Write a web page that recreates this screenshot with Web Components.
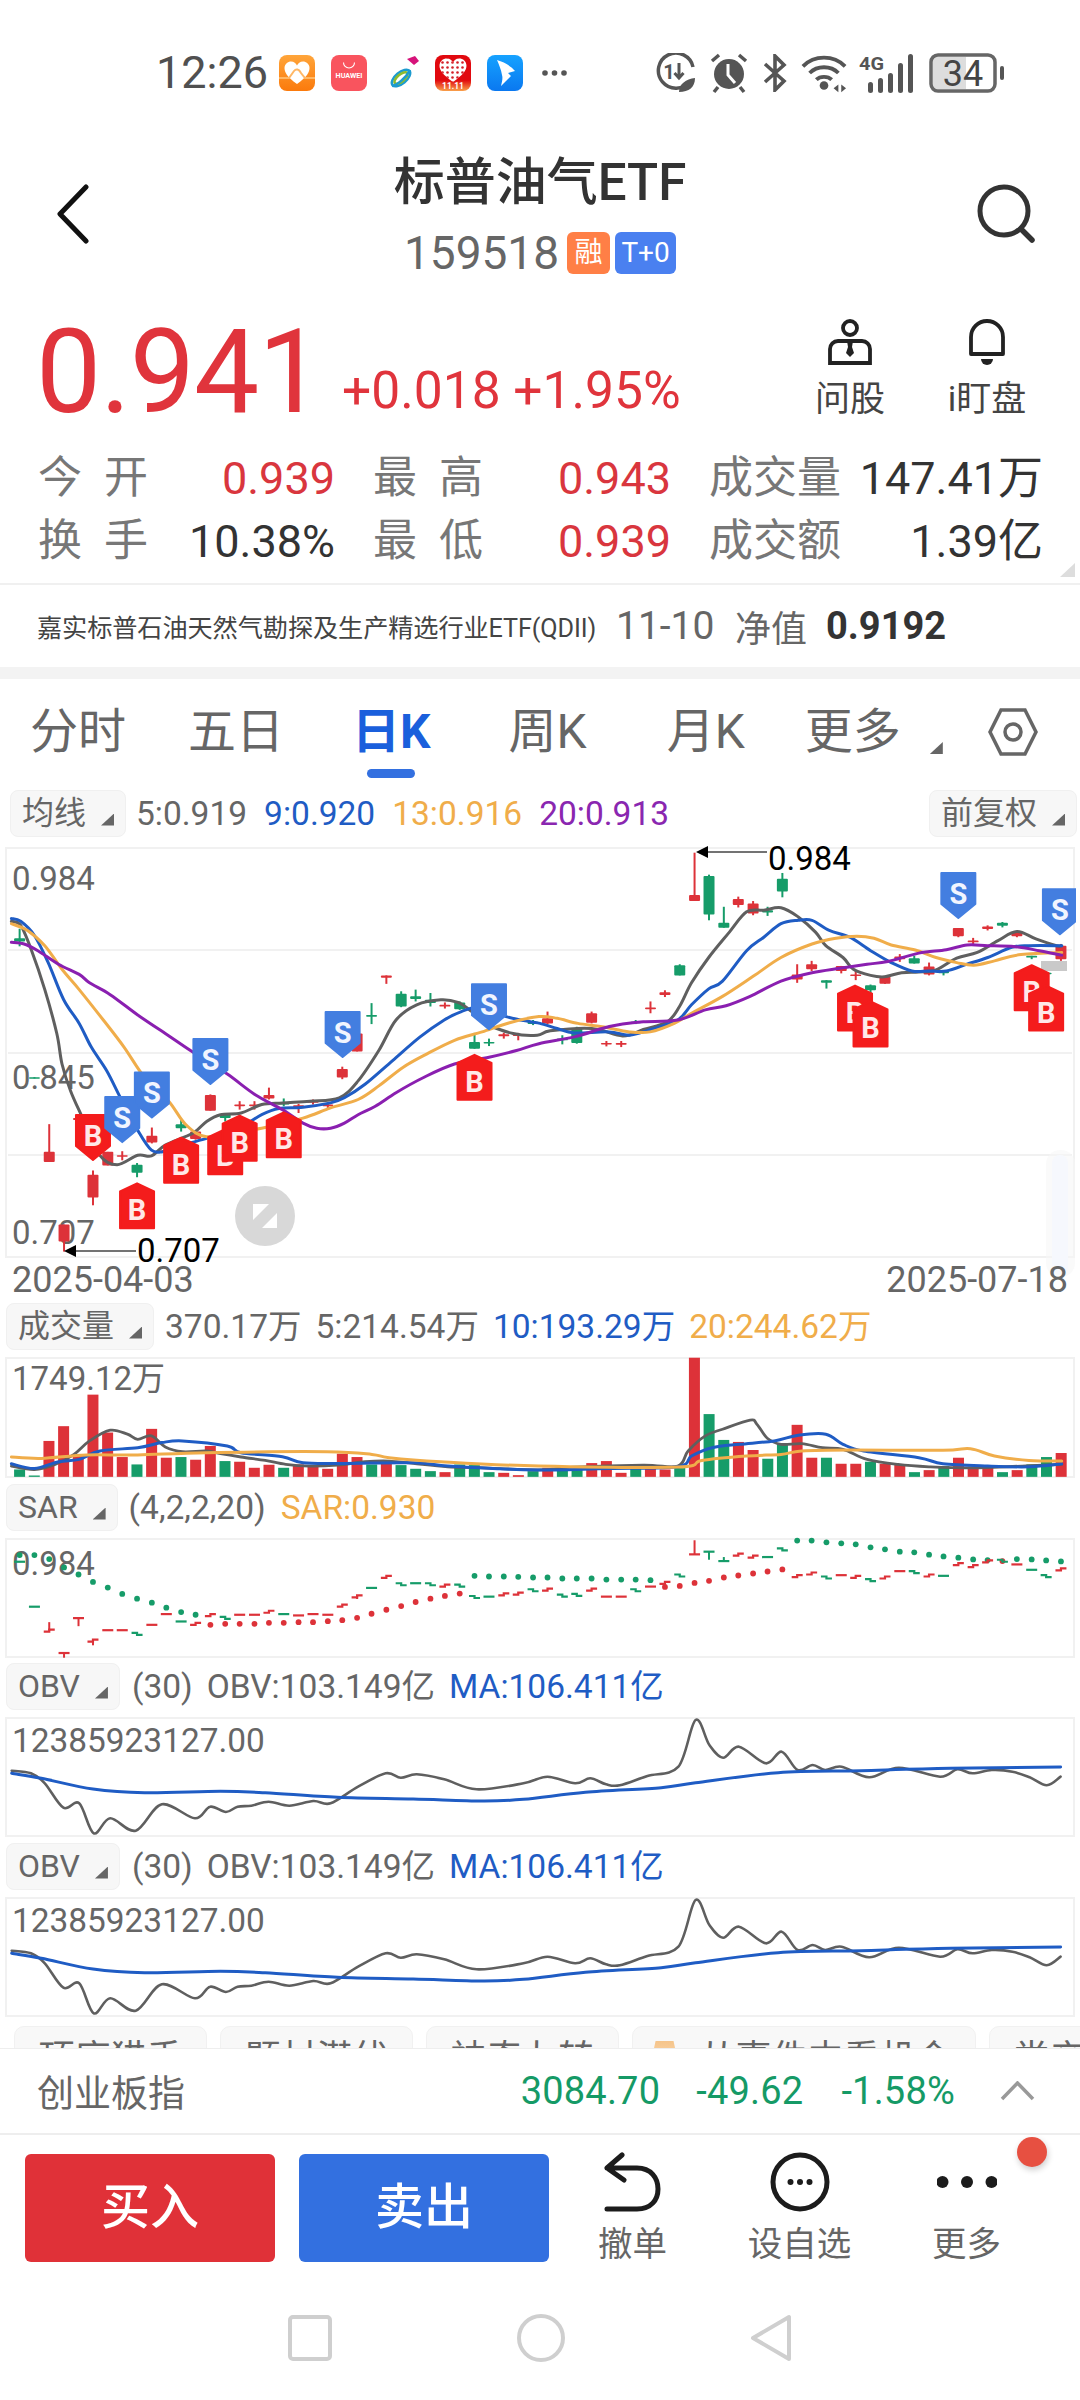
<!DOCTYPE html>
<html lang="zh-CN"><head><meta charset="utf-8"><title>标普油气ETF</title>
<style>
html,body{margin:0;padding:0;background:#fff}
body{width:1080px;height:2400px;overflow:hidden;font-family:Roboto,"Noto Sans CJK SC",sans-serif;color:#666}
.b{color:#1f5cc4}.o{color:#f0ad4a}.p{color:#8a27b0}.r{color:#d9363e}.k{color:#333}
</style></head><body>
<status-bar></status-bar>
<app-header></app-header>
<quote-panel>
  <stat-cell label="今开" spaced><span class="r">0.939</span></stat-cell>
  <stat-cell label="最高" spaced><span class="r">0.943</span></stat-cell>
  <stat-cell label="成交量"><span class="k">147.41万</span></stat-cell>
  <stat-cell label="换手" spaced><span class="k">10.38%</span></stat-cell>
  <stat-cell label="最低" spaced><span class="r">0.939</span></stat-cell>
  <stat-cell label="成交额"><span class="k">1.39亿</span></stat-cell>
</quote-panel>
<fund-row></fund-row>
<chart-tabs></chart-tabs>
<ind-row pill="均线" gap="17" h="57" left="10" ml="10" right="3"><span>5:0.919</span><span class="b">9:0.920</span><span class="o">13:0.916</span><span class="p">20:0.913</span><ind-pill slot="right" label="前复权"></ind-pill></ind-row>
<k-chart></k-chart>
<date-axis></date-axis>
<ind-row pill="成交量" gap="14" h="54" ml="11"><span>370.17万</span><span>5:214.54万</span><span class="b">10:193.29万</span><span class="o">20:244.62万</span></ind-row>
<vol-chart></vol-chart>
<ind-row pill="SAR" gap="15" h="60" top="6" ml="11"><span>(4,2,2,20)</span><span class="o">SAR:0.930</span></ind-row>
<sar-chart></sar-chart>
<ind-row pill="OBV" gap="14" h="59" top="5" ml="12"><span>(30)</span><span>OBV:103.149亿</span><span class="b">MA:106.411亿</span></ind-row>
<obv-chart></obv-chart>
<ind-row pill="OBV" gap="14" h="60" top="6" ml="12"><span>(30)</span><span>OBV:103.149亿</span><span class="b">MA:106.411亿</span></ind-row>
<obv-chart></obv-chart>
<tag-strip></tag-strip>
<index-bar></index-bar>
<trade-bar></trade-bar>
<nav-bar></nav-bar>
<script>
function def(name,html,extra){
  customElements.define(name,class extends HTMLElement{
    constructor(){super();const s=this.attachShadow({mode:'open'});
      s.innerHTML=typeof html==='function'?html(this):html;if(extra)extra(this,s);}
  });
}
/* ---------- chart helpers ---------- */
const RED='#dd3239',GRN='#169c69',GRY='#5f5f5f',BLU='#1f5cc4',ORG='#f0ad4a',PUR='#8a1fb0';
const CX=i=>19.6+14.67*i;
function sm(p){let d=`M${p[0][0].toFixed(1)} ${p[0][1].toFixed(1)}`;
  for(let i=0;i<p.length-1;i++){const a=p[i-1]||p[i],b=p[i],c=p[i+1],e=p[i+2]||c;
    d+=`C${(b[0]+(c[0]-a[0])/6).toFixed(1)} ${(b[1]+(c[1]-a[1])/6).toFixed(1)} ${(c[0]-(e[0]-b[0])/6).toFixed(1)} ${(c[1]-(e[1]-b[1])/6).toFixed(1)} ${c[0].toFixed(1)} ${c[1].toFixed(1)}`;}
  return d;}
function line(p,c,w){return `<path d="${sm(p)}" fill="none" stroke="${c}" stroke-width="${w}" stroke-linejoin="round" stroke-linecap="round"/>`;}
function merge(L,R,fx,fy){return L.map(a=>[a[0]/fx,fy(a[1])]).concat(R.map(a=>[540+a[0]/fx,fy(a[1])]));}
const frame=(x,y,w,h)=>`<rect x="${x+1}" y="${y+1}" width="${w-2}" height="${h-2}" fill="none" stroke="#f1f1f1" stroke-width="2"/>`;
const chartCss=h=>`<style>:host{display:block;margin:0 5px;width:1070px;height:${h}px}svg{display:block;overflow:visible}text{font-family:Roboto,"Noto Sans CJK SC",sans-serif}</style>`;

/* ---------- status bar ---------- */
def('status-bar',`<style>
:host{display:flex;height:110px;box-sizing:border-box;padding:36px 0 0 156px;align-items:center}
.t{font-size:45px;color:#505050;width:123px;line-height:74px}
svg{display:block;flex:none}
text{font-family:Roboto,sans-serif}
</style>
<span class="t">12:26</span>
<svg width="36" height="36" viewBox="0 0 36 36"><defs><linearGradient id="g1" x1="0" y1="0" x2="0" y2="1"><stop offset="0" stop-color="#ffa53a"/><stop offset="1" stop-color="#fb7a0c"/></linearGradient></defs><rect width="36" height="36" rx="8" fill="url(#g1)"/><path d="M18 29C8 22 5.500 17 5.500 13C5.500 9 9 6.500 12 6.500C15 6.500 17 8.500 18 10.500C19 8.500 21 6.500 24 6.500C27 6.500 30.500 9 30.500 13C30.500 17 28 22 18 29Z" fill="#fff"/><path d="M0 23H10L15 16C17 13.500 20 14 22 18L26 23H36" fill="none" stroke="#ffb765" stroke-width="2"/></svg>
<svg style="margin-left:16px" width="36" height="36" viewBox="0 0 36 36"><rect width="36" height="36" rx="8" fill="#f9545e"/><path d="M12.500 7.500a5.500 5.500 0 0 0 11 0" fill="none" stroke="#fff" stroke-width="1.100"/><text x="18" y="23" font-size="7.200" font-weight="700" fill="#fff" text-anchor="middle">HUAWEI</text></svg>
<svg style="margin-left:16px" width="42" height="36" viewBox="0 0 42 36"><g fill="none" stroke-width="2.600"><ellipse cx="18" cy="23" rx="11" ry="5.500" stroke="#1c9bcf" transform="rotate(-40 18 23)"/><ellipse cx="18" cy="23" rx="8" ry="3.500" stroke="#8dbb2f" transform="rotate(-40 18 23)"/><path d="M9 31C14 30 23 23 27 15" stroke="#1c9bcf"/></g><path d="M24 4l8-3 4 5-5 4z" fill="#d6137a"/></svg>
<svg style="margin-left:10px" width="36" height="36" viewBox="0 0 36 36"><defs><linearGradient id="g2" x1="0" y1="0" x2="0" y2="1"><stop offset=".7" stop-color="#e1090f"/><stop offset="1" stop-color="#f9a04a"/></linearGradient><pattern id="lat" width="5" height="5" patternUnits="userSpaceOnUse"><circle cx="2.500" cy="2.500" r="1.300" fill="#d32028"/></pattern></defs><rect width="36" height="36" rx="8" fill="url(#g2)"/><path d="M18 27C8 20 4.500 15 4.500 11C4.500 6 8 3.500 12 3.500C15 3.500 17 5.500 18 7.500C19 5.500 21 3.500 24 3.500C28 3.500 31.500 6 31.500 11C31.500 15 28 20 18 27Z" fill="#fff"/><path d="M18 27C8 20 4.500 15 4.500 11C4.500 6 8 3.500 12 3.500C15 3.500 17 5.500 18 7.500C19 5.500 21 3.500 24 3.500C28 3.500 31.500 6 31.500 11C31.500 15 28 20 18 27Z" fill="url(#lat)"/><text x="18" y="34" font-size="8.500" font-weight="700" fill="#fff" text-anchor="middle">11.11</text></svg>
<svg style="margin-left:16px" width="36" height="36" viewBox="0 0 36 36"><defs><linearGradient id="g3" x1="0" y1="0" x2="0" y2="1"><stop offset="0" stop-color="#16a2ff"/><stop offset="1" stop-color="#0a78f0"/></linearGradient></defs><rect width="36" height="36" rx="8" fill="url(#g3)"/><path d="M10 5C17 7 24 11 28 16L21 18 24 21 14 31C15 27 16 23 15 20 14 14 12 10 10 5Z" fill="#fff"/></svg>
<svg style="margin-left:19px" width="25" height="8" viewBox="0 0 25 8"><g fill="#555"><circle cx="3" cy="4" r="2.800"/><circle cx="12.500" cy="4" r="2.800"/><circle cx="22" cy="4" r="2.800"/></g></svg>
<svg style="margin-left:89px" width="40" height="40" viewBox="0 0 40 40"><path d="M34 28A17.500 17.500 0 1 1 37 14" fill="none" stroke="#555" stroke-width="3.500"/><text x="13" y="26" font-size="20" font-weight="700" fill="#555" text-anchor="middle">1</text><path d="M23 10V24M18.500 20L23 25L27.500 20" fill="none" stroke="#555" stroke-width="3"/><path d="M23 39C23 31 30 26 39 25C39 34 33 39 23 39Z" fill="#555"/></svg>
<svg style="margin-left:12px" width="42" height="42" viewBox="0 0 42 42"><circle cx="21" cy="22" r="15" fill="#555"/><path d="M20 12V23L27 31" fill="none" stroke="#fff" stroke-width="3"/><path d="M4 9L11 3M38 9L31 3M10 35L6 40M32 35L36 40" stroke="#555" stroke-width="3.500" fill="none"/></svg>
<svg style="margin-left:11px" width="28" height="38" viewBox="0 0 28 38"><path d="M4 10L23 27L14 36V20M4 28L23 11L14 2V18" fill="none" stroke="#555" stroke-width="3.600"/></svg>
<svg style="margin-left:12px" width="46" height="40" viewBox="0 0 48 40"><g fill="none" stroke="#555" stroke-width="4"><path d="M2 13C14 1 34 1 46 13"/><path d="M9 20C17 12 31 12 39 20"/><path d="M16 27C20 23 28 23 32 27"/></g><circle cx="24" cy="33" r="4.500" fill="#555"/><path d="M34 36l5-4v8zM47 36l-5-4v8z" fill="#555"/></svg>
<svg style="margin-left:12px" width="56" height="40" viewBox="0 0 56 40"><text x="0" y="17" font-size="18" font-weight="700" fill="#555" textLength="25" lengthAdjust="spacingAndGlyphs">4G</text><g fill="#555"><rect x="9" y="29" width="5" height="11" rx="2.500"/><rect x="19" y="25" width="5" height="15" rx="2.500"/><rect x="29" y="20" width="5" height="20" rx="2.500"/><rect x="39" y="10" width="5" height="30" rx="2.500"/><rect x="49" y="1" width="5" height="39" rx="2.500"/></g></svg>
<svg style="margin-left:14px" width="76" height="40" viewBox="0 0 76 40"><path d="M4 4h33v32H4z" fill="#ddd"/><rect x="2" y="2" width="64" height="36" rx="7" fill="none" stroke="#666" stroke-width="3.500"/><text x="34" y="33" font-size="36" fill="#444" text-anchor="middle">34</text><rect x="71" y="13" width="4" height="14" rx="2" fill="#555"/></svg>
`);
/* ---------- header ---------- */
def('app-header',`<style>
:host{display:grid;grid-template-columns:1fr auto 1fr;align-items:center;box-sizing:border-box;height:174px;padding:43px 43px 10px 43px}
.c{display:flex;flex-direction:column;align-items:center}
h1{margin:0;font-size:51px;line-height:60px;font-weight:500;color:#333}
.sub{display:flex;align-items:center;margin-top:19px;height:42px;gap:5px}
.code{font-size:46px;color:#666;margin-right:3px}
.bd{height:42px;line-height:42px;border-radius:6px;color:#fff;font-size:28px;text-align:center}
.a{width:43px;background:#ff7f46}.t{width:61px;background:#4a80f0}
svg{display:block}.s{justify-self:end}.bk{margin-left:12px}
</style>
<svg class="bk" width="36" height="60" viewBox="0 0 36 60"><path d="M31 3L5 30L31 57" fill="none" stroke="#111" stroke-width="5" stroke-linecap="round" stroke-linejoin="round"/></svg>
<div class="c"><h1>标普油气ETF</h1><div class="sub"><span class="code">159518</span><span class="bd a">融</span><span class="bd t">T+0</span></div></div>
<svg class="s" width="62" height="60" viewBox="0 0 62 60"><circle cx="29" cy="27" r="24" fill="none" stroke="#333" stroke-width="5"/><path d="M46 45L57 56" stroke="#333" stroke-width="5.500" stroke-linecap="round"/></svg>
`);
/* ---------- quote ---------- */
def('stat-cell',h=>{const l=h.getAttribute('label');const sp=h.hasAttribute('spaced');
  return `<style>:host{display:flex;justify-content:space-between;align-items:center;height:63px;font-size:45px;line-height:63px;white-space:nowrap}
.l{color:#777;display:flex;justify-content:space-between;width:${sp?'110px':'auto'};font-size:44px}</style>
<span class="l">${sp?[...l].map(c=>`<span>${c}</span>`).join(''):l}</span><slot></slot>`;});
def('quote-panel',`<style>
:host{display:block;position:relative;box-sizing:border-box;height:301px;border-bottom:2px solid #f0f0f0}
.top{display:flex;height:163px;padding-left:36px;position:relative}
.pr{font-size:116px;line-height:110px;color:#e0343c;margin-top:33px;width:306px;letter-spacing:-1px}
.ch{font-size:51.500px;line-height:50px;color:#e0343c;margin-top:82px;white-space:nowrap}
.acts{margin-left:auto;display:flex;padding-right:58px;gap:67px;margin-top:34px}
.ac{display:flex;flex-direction:column;align-items:center;width:70px}
.ac svg{display:block;height:48px;margin-bottom:14px}
.ac span{font-size:35px;line-height:40px;color:#444;white-space:nowrap}
.g{display:grid;grid-template-columns:297px 298px 334px;column-gap:38px;padding-left:38px}
.tri{position:absolute;right:5px;bottom:6px;width:15px;height:14px;background:#ddd;clip-path:polygon(100% 0,100% 100%,0 100%)}
</style>
<div class="top"><span class="pr">0.941</span><span class="ch">+0.018 +1.95%</span>
<div class="acts">
<div class="ac"><svg width="46" height="48" viewBox="0 0 46 48"><circle cx="23" cy="10" r="7" fill="none" stroke="#222" stroke-width="3.800"/><path d="M11 23H35A8 8 0 0 1 43 31V45H3V31A8 8 0 0 1 11 23Z" fill="none" stroke="#222" stroke-width="3.800"/><path d="M20 23H26L25 29L27 35L23 39L19 35L21 29Z" fill="#222"/></svg><span>问股</span></div>
<div class="ac"><svg width="38" height="48" viewBox="0 0 38 48"><path d="M3 36V19A16 16 0 0 1 35 19V36Z" fill="none" stroke="#222" stroke-width="3.800" stroke-linejoin="round"/><path d="M13 41H25A6 6 0 0 1 13 41Z" fill="#222"/></svg><span>i盯盘</span></div>
</div></div>
<div class="g"><slot></slot></div><i class="tri"></i>`);
def('fund-row',`<style>:host{display:flex;align-items:center;height:82px;padding-left:37px;white-space:nowrap;color:#555}
.n{font-size:25.200px;color:#444;width:579px;letter-spacing:-.1px}.d{font-size:39px;color:#666;width:119px}.j{font-size:36px;color:#666;width:91px}.v{font-size:38px;font-weight:700;color:#333}</style>
<span class="n">嘉实标普石油天然气勘探及生产精选行业ETF(QDII)</span><span class="d">11-10</span><span class="j">净值</span><span class="v">0.9192</span>`);
/* ---------- tabs ---------- */
def('chart-tabs',`<style>
:host{display:flex;box-sizing:border-box;height:123px;padding:29px 0 0 30px;border-top:12px solid #f3f3f3;position:relative;font-size:48px;line-height:48px;color:#666;white-space:nowrap}
span{display:block}
.on{color:#1a5fdc;font-weight:700;position:relative}
.on::after{content:"";position:absolute;left:15px;top:61px;width:48px;height:9px;border-radius:5px;background:#3370e0}
i{display:block;width:13px;height:12px;margin:34px 0 0 29px;background:#666;clip-path:polygon(100% 0,100% 100%,0 100%)}
svg{display:block;margin-left:45px;margin-top:-1px}
</style>
<span>分时</span><span style="margin-left:62px">五日</span><span class="on" style="margin-left:68px">日K</span><span style="margin-left:78px">周K</span><span style="margin-left:80px">月K</span><span style="margin-left:60px">更多</span><i></i>
<svg width="50" height="50" viewBox="0 0 50 50"><path d="M13 3H37L48 25L37 47H13L2 25Z" fill="none" stroke="#666" stroke-width="3.500"/><circle cx="25" cy="25" r="8" fill="none" stroke="#666" stroke-width="3.500"/></svg>`);
/* ---------- indicator rows ---------- */
def('ind-pill',h=>`<style>:host{display:flex;align-items:center;box-sizing:border-box;height:47px;padding:0 11px;background:#f7f7f7;border:1px solid #f0f0f0;border-radius:8px;font-size:32px;color:#666;white-space:nowrap}
i{display:block;width:13px;height:12px;margin:12px 0 0 15px;background:#666;clip-path:polygon(100% 0,100% 100%,0 100%)}</style>${h.getAttribute('label')}<i></i>`);
def('ind-row',h=>{const top=h.getAttribute('top')||0,H=h.getAttribute('h'),g=h.getAttribute('gap'),L=h.getAttribute('left')||6,ml=h.getAttribute('ml')||14,R=h.getAttribute('right')||4;
 return `<style>:host{display:block;box-sizing:border-box;height:${H}px;padding:${top}px ${R}px 0 ${L}px;font-size:33.500px;line-height:47px;white-space:nowrap}
.w{display:flex;align-items:center;height:47px}
.v{display:flex;gap:${g}px;margin-left:${ml}px}
slot[name=right]{display:block;margin-left:auto}</style>
<div class="w"><ind-pill label="${h.getAttribute('pill')}"></ind-pill><div class="v"><slot></slot></div><slot name="right"></slot></div>`;});
/* ---------- main chart ---------- */
def('k-chart',()=>{
 const X=z=>z/2.904,Y=z=>780+z/2.958;
 const C=[[57,440,468,478,492,'g'],[100,879,879,883,883,'g'],[143,1018,1100,1130,1130,'r'],[186,1315,1315,1365,1395,'r'],[228,1000,1000,1006,1012,'r'],[270,1155,1168,1235,1258,'r'],[313,1100,1100,1140,1140,'r'],[355,1098,1110,1114,1125,'r'],[398,1133,1138,1162,1175,'g'],[441,1028,1052,1072,1075,'r'],[483,1090,1095,1100,1110,'r'],[526,1005,1018,1030,1040,'g'],[568,1038,1040,1062,1064,'r'],[611,930,932,978,978,'r'],[654,985,990,1000,1010,'g'],[696,950,960,963,975,'r'],[739,950,960,963,975,'r'],[781,910,932,942,945,'r'],[824,942,955,960,965,'g'],[867,958,962,968,985,'r'],[909,945,950,955,960,'r'],[952,955,960,964,970,'r'],[994,848,855,880,885,'r'],[1037,750,750,803,803,'r'],[1079,660,695,700,722,'g'],[1122,578,578,585,603,'r'],[1165,625,632,670,672,'g'],[1207,620,640,648,655,'g'],[1250,630,650,660,670,'g'],[1292,658,665,670,676,'r'],[1335,655,658,678,680,'g'],[1378,748,775,795,795,'g'],[1420,765,775,779,787,'g'],[1463,748,752,758,765,'r'],[1505,748,752,757,770,'r'],[1548,710,715,722,725,'g'],
 [1590,685,705,720,722,'r'],[1633,755,765,770,782,'g'],[1675,730,735,778,780,'g'],[1718,685,690,718,720,'r'],[1761,772,778,782,788,'r'],[1804,772,778,783,790,'r'],[1846,710,715,718,722,'g'],[1889,655,673,678,690,'r'],[1931,622,628,636,642,'r'],[1974,545,548,578,578,'g'],[2017,215,340,358,358,'r'],[2059,280,284,398,415,'g'],[2102,375,422,437,437,'g'],[2144,345,352,370,377,'r'],[2187,358,365,395,400,'r'],[2229,375,385,392,402,'g'],[2272,275,292,330,347,'g'],[2315,545,575,590,600,'r'],[2357,535,545,560,565,'r'],[2400,592,592,600,617,'g'],[2443,550,550,565,572,'r'],[2485,562,575,580,592,'r'],[2528,605,607,622,630,'g'],[2570,582,582,603,603,'r'],[2613,515,522,530,538,'r'],[2655,520,527,543,543,'g'],[2698,540,552,575,578,'r'],[2740,562,565,572,578,'g'],[2783,438,438,462,465,'r'],[2826,467,475,480,487,'r'],[2868,430,433,441,445,'r'],[2911,420,422,431,436,'g'],[2953,450,452,462,465,'r'],[2996,520,520,525,530,'g'],[3038,568,570,574,578,'g'],[3081,485,490,530,535,'r']];
 let c='';for(const a of C){const col=a[5]=='r'?RED:GRN,x=X(a[0]);
   c+=`<path d="M${x} ${Y(a[1])}V${Y(a[4])}" stroke="${col}" stroke-width="2"/><rect x="${x-5.500}" y="${Y(a[2])}" width="11" height="${Math.max(Y(a[3])-Y(a[2]),1.600)}" rx="1" fill="${col}"/>`;}
 const M5L=[[33,418],[60,430],[90,500],[130,620],[165,750],[180,840],[205,920],[240,1000],[290,1110],[340,1138],[400,1110],[440,1112],[480,1080],[560,1045],[600,1010],[640,990],[700,985],[760,960],[820,955],[900,950],[985,940],[1040,890],[1100,800],[1150,710],[1210,665],[1280,650],[1330,658],[1370,685],[1410,720],[1490,750],[1560,755]],
 M5R=[[30,742],[150,735],[240,757],[300,738],[370,715],[405,670],[440,600],[490,525],[550,450],[600,390],[650,385],[700,378],[750,405],[800,450],[830,490],[880,525],[910,560],[960,578],[1000,582],[1050,570],[1100,568],[1150,562],[1210,527],[1270,510],[1330,475],[1385,448],[1440,470],[1500,490],[1515,490]],
 M9L=[[33,410],[60,418],[100,460],[140,540],[185,650],[230,720],[265,790],[310,860],[350,940],[405,1045],[440,1095],[470,1100],[510,1085],[600,1060],[700,1025],[760,990],[810,972],[880,968],[960,955],[1000,940],[1060,900],[1140,830],[1220,760],[1290,710],[1340,685],[1400,670],[1470,700],[1540,715]],
 M9R=[[0,720],[50,735],[100,748],[200,745],[260,755],[320,738],[400,710],[440,665],[490,618],[530,595],[600,505],[650,465],[700,425],[750,415],[790,415],[840,445],[900,465],[960,505],[1020,540],[1080,565],[1130,565],[1180,565],[1240,545],[1300,525],[1370,495],[1420,490],[1515,490]],
 M13L=[[33,425],[80,445],[130,490],[180,560],[230,620],[300,710],[360,790],[420,880],[490,950],[540,1020],[600,1055],[700,1035],[760,1030],[880,1000],[960,970],[1040,945],[1100,905],[1170,850],[1240,810],[1320,770],[1400,745],[1480,718],[1565,700]],
 M13R=[[50,705],[110,720],[180,730],[260,745],[320,745],[390,720],[440,690],[530,640],[620,580],[700,525],[790,485],[860,468],[920,462],[970,468],[1020,488],[1090,503],[1150,525],[1210,540],[1260,548],[1320,535],[1390,517],[1515,510]],
 M20L=[[33,480],[70,485],[110,505],[170,545],[230,575],[260,600],[320,635],[400,695],[480,750],[560,805],[660,870],[740,930],[820,975],[880,1015],[920,1030],[960,1030],[1000,1015],[1040,990],[1090,965],[1150,925],[1230,880],[1320,840],[1420,820],[1500,800],[1565,780]],
 M20R=[[100,760],[180,735],[240,722],[300,715],[400,710],[480,680],[540,668],[610,640],[700,595],[790,570],[870,557],[950,545],[1010,537],[1100,512],[1180,502],[1240,488],[1300,490],[1380,493],[1450,505],[1515,518]];
 const fx=2.904;
 const S=(z,t)=>{const x=X(z),y=Y(t);return `<path d="M${x-17} ${y+1}H${x+17}V${y+32}L${x} ${y+46}L${x-17} ${y+32}Z" fill="#437ee0" stroke="#437ee0" stroke-width="2" stroke-linejoin="round"/><text x="${x}" y="${y+32}" font-size="29" font-weight="700" fill="#f1f5ff" text-anchor="middle">S</text>`;};
 const Bd=(z,t)=>{const x=X(z),y=Y(t);return `<path d="M${x-17} ${y+9}L${x} ${y+1}L${x+17} ${y+9}V${y+46}H${x-17}Z" fill="#f41c1c" stroke="#f41c1c" stroke-width="2" stroke-linejoin="round"/><text x="${x}" y="${y+38}" font-size="29" font-weight="700" fill="#ffe8e8" text-anchor="middle">B</text>`;};
 const Bdn=(z,t)=>{const x=X(z),y=Y(t);return `<path d="M${x-17} ${y+1}H${x+17}V${y+32}L${x} ${y+46}L${x-17} ${y+32}Z" fill="#f41c1c" stroke="#f41c1c" stroke-width="2" stroke-linejoin="round"/><text x="${x}" y="${y+32}" font-size="29" font-weight="700" fill="#ffe8e8" text-anchor="middle">B</text>`;};
 const grid=[950,1053,1155].map(y=>`<path d="M8 ${y}H1072" stroke="#ececec" stroke-width="1.500"/>`).join('');
 const lab=(t,c)=>`<text x="12" y="${c+11.700}" font-size="33" fill="#666">${t}</text>`;
 return chartCss(411)+`<svg width="1070" height="411" viewBox="5 847 1070 411">
 <defs><clipPath id="cb"><rect x="5" y="847" width="1071" height="411"/></clipPath></defs>
 ${frame(5,847,1070,411)}${grid}${lab('0.984',878)}${lab('0.845',1077)}${lab('0.707',1232)}
 <rect x="1041" y="961" width="26" height="10" fill="#c9c9c9"/>
 ${c}
 ${line(merge(M5L,M5R,fx,Y),GRY,3)}${line(merge(M9L,M9R,fx,Y),BLU,3)}${line(merge(M13L,M13R,fx,Y),ORG,3)}${line(merge(M20L,M20R,fx,Y),PUR,3)}
 <g clip-path="url(#cb)">
 ${Bdn(270,988)}${S(355,935)}${S(441,862)}${S(611,763)}${Bd(398,1190)}${Bd(526,1055)}${Bd(654,1030)}${Bd(696,990)}${Bd(824,980)}${S(995,683)}${S(1420,601)}${Bd(1378,810)}
 ${Bd(2483,605)}${Bd(2528,652)}${Bd(2996,545)}${Bd(3038,605)}${S(2783,272)}${S(3078,320)}
 </g>
 <rect x="1046" y="1150" width="29" height="127" rx="14" fill="#f6f6f6" opacity=".6"/><rect x="1052" y="1155" width="16" height="120" rx="8" fill="#f6f8fd"/>
 <circle cx="265" cy="1216" r="30" fill="#d8d8d8"/><path d="M253 1204H269L253 1220ZM277 1228H262L277 1213Z" fill="#fff"/>
 <path d="M75 1251H136" stroke="#444" stroke-width="1.500"/><path d="M64 1251L76 1245V1257Z" fill="#000"/><text x="137" y="1262" font-size="33" fill="#000">0.707</text>
 <path d="M707 852H767" stroke="#444" stroke-width="1.500"/><path d="M696 852L708 846V858Z" fill="#000"/><text x="768" y="870" font-size="33" fill="#000">0.984</text>
 </svg>`;
});
def('date-axis',`<style>:host{display:flex;justify-content:space-between;box-sizing:border-box;height:45px;padding:3px 12px 0 12px;font-size:36px;line-height:39px;color:#666}</style><span>2025-04-03</span><span>2025-07-18</span>`);
/* ---------- volume ---------- */
def('vol-chart',()=>{
 const top=[505,523,420,376,465,282,395,468,490,384,470,468,476,435,480,482,500,491,500,490,495,503,458,468,490,480,492,503,510,513,490,492,513,515,522,510,500,505,505,486,480,515,500,498,505,500,172,340,417,423,447,473,427,372,470,470,488,488,482,488,490,513,507,495,470,497,495,513,507,490,468,456];
 const cols=['g','g','r','r','r','r','r','r','g','r','r','g','r','r','g','r','r','r','g','r','r','r','r','r','g','r','g','g','g','r','g','g','g','r','r','g','r','g','g','r','r','r','g','r','r','g','r','g','g','r','r','g','g','r','r','g','r','r','g','r','r','g','r','g','r','r','r','g','r','g','g','r'];
 const Y=z=>z/2.98-57,base=Y(527);
 let b='';top.forEach((t,i)=>{const y=Y(t);b+=`<rect x="${CX(i)-5.500-5}" y="${y}" width="11" height="${base-y}" fill="${cols[i]=='r'?RED:GRN}"/>`;});
 const GL=[[33,495],[100,505],[160,490],[215,460],[260,420],[320,388],[370,400],[400,415],[440,405],[480,438],[530,452],[600,450],[640,458],[700,468],[770,478],[830,490],[900,495],[980,492],[1060,482],[1130,480],[1200,487],[1300,497],[1400,500],[1565,506]],
 GR=[[100,498],[300,492],[400,495],[430,450],[480,405],[530,385],[610,358],[630,370],[660,412],[700,430],[760,428],[820,440],[880,445],[950,475],[1040,490],[1130,497],[1250,500],[1400,495],[1515,490]],
 BL=[[33,488],[100,502],[170,482],[230,475],[290,450],[400,440],[470,425],[530,420],[660,435],[700,455],[820,467],[880,485],[1000,487],[1200,485],[1300,495],[1450,503],[1565,507]],
 BR=[[200,502],[400,497],[440,465],[500,440],[580,430],[680,420],[750,403],[830,400],[880,430],[940,450],[1100,470],[1170,488],[1300,495],[1420,497],[1515,488]],
 OL=[[33,468],[120,472],[250,462],[400,462],[600,455],[950,452],[1080,460],[1130,470],[1280,482],[1565,495]],
 OR=[[400,498],[470,478],[600,465],[700,460],[760,450],[900,447],[1170,448],[1250,443],[1320,465],[1420,478],[1515,480]];
 const sh=p=>p.map(a=>[a[0]-5,a[1]]);
 return chartCss(121)+`<svg width="1070" height="121" viewBox="0 0 1070 121">
 ${frame(0,0,1070,121)}${b}
 ${line(sh(merge(GL,GR,2.904,Y)),GRY,2.800)}${line(sh(merge(BL,BR,2.904,Y)),BLU,3)}${line(sh(merge(OL,OR,2.904,Y)),ORG,3)}
 <text x="7" y="33" font-size="33" fill="#666">1749.12万</text></svg>`;
});
/* ---------- SAR ---------- */
def('sar-chart',()=>{
 const Y=z=>z/2.98+1300-1538,X=z=>z/2.904-5;
 const gd=[[57,760],[100,760],[143,772],[186,797],[228,818],[270,840],[313,857],[355,876],[398,890],[441,902],[483,917],[526,930],[568,938],[1378,822],[1420,824],[1463,824],[1505,825],[1548,827],[1590,827],[1633,830],[1675,830],[1718,830],[1761,833],[1804,833],[1846,833],[1889,835],[2315,717],[2357,717],[2400,722],[2443,725],[2485,728],[2528,737],[2570,743],[2613,750],[2655,752],[2698,759],[2740,764],[2783,768],[2826,773],[2868,775],[2953,772],[2996,773],[3038,776],[3081,779]];
 const rd=[[611,968],[654,965],[696,965],[739,965],[781,962],[824,962],[867,960],[909,960],[952,957],[994,954],[1037,947],[1079,935],[1122,923],[1165,912],[1207,900],[1250,890],[1292,882],[1335,875],[1931,855],[1974,852],[2017,843],[2059,837],[2102,827],[2144,821],[2187,815],[2229,809],[2272,803],[2911,778]];
 const ds=[[57,780,'g'],[100,914,'g'],[143,985,'r',-25],[186,1052,'r',14],[228,948,'r',24],[270,1015,'r',14],[313,984,'r'],[355,984,'r'],[398,995,'g'],[441,968,'r'],[483,936,'r'],[526,958,'g'],[568,965,'r'],[611,939,'r'],[654,947,'g'],[696,938,'r'],[739,938,'r'],[781,929,'r'],[824,936,'g'],[867,940,'r'],[909,936,'r'],[952,938,'r'],[994,911,'r'],[1037,883,'r',8],[1079,858,'g'],[1122,825,'r'],[1165,847,'g'],[1207,844,'g'],[1250,847,'g'],[1292,851,'r'],[1335,851,'g'],[1378,885,'g'],[1420,884,'g'],[1463,877,'r'],[1505,875,'r'],[1548,865,'g'],[1590,863,'r'],[1633,881,'g'],[1675,879,'g'],[1718,863,'r'],[1761,884,'r'],[1804,884,'r'],[1846,865,'g'],[1889,854,'r'],[1931,843,'r'],[1974,821,'g'],[2017,758,'r',-42],[2059,750,'g',24],[2102,778,'g',-12],[2144,759,'r'],[2187,765,'r'],[2229,766,'g'],[2272,743,'g'],[2315,823,'r'],[2357,815,'r'],[2400,827,'g'],[2443,820,'r'],[2485,825,'r'],[2528,835,'g'],[2570,827,'r'],[2613,808,'r'],[2655,811,'g'],[2698,821,'r'],[2740,822,'g'],[2783,787,'r'],[2826,793,'r'],[2868,779,'r'],[2911,777,'g'],[2953,788,'r'],[2996,804,'g'],[3038,823,'g'],[3081,803,'r']];
 let s='';for(const d of gd)s+=`<circle cx="${X(d[0])}" cy="${Y(d[1])}" r="2.900" fill="${GRN}"/>`;
 for(const d of rd)s+=`<circle cx="${X(d[0])}" cy="${Y(d[1])}" r="2.900" fill="${RED}"/>`;
 for(const d of ds){const c=d[2]=='r'?RED:GRN,x=X(d[0]),y=Y(d[1]);
   const step=d[1]%2==1?(d[2]=='r'?-2:2):0;
   s+=`<path d="M${x-5.500} ${y-step/2}H${x}V${y+step/2}H${x+5.500}" fill="none" stroke="${c}" stroke-width="2.200"/>`;
   if(d[3])s+=`<path d="M${x} ${y}V${y+d[3]/2.98}" stroke="${c}" stroke-width="2"/>`;}
 return chartCss(120)+`<svg width="1070" height="120" viewBox="0 0 1070 120">${frame(0,0,1070,120)}
 <text x="7" y="36.500" font-size="33" fill="#666">0.984</text>${s}</svg>`;
});
/* ---------- OBV ---------- */
def('obv-chart',()=>{
 const G=[[17,332],[45,340],[65,370],[92,443],[115,430],[136,520],[160,475],[197,512],[235,433],[283,475],[305,440],[328,456],[345,440],[365,437],[390,425],[420,437],[455,423],[480,430],[520,380],[560,340],[582,353],[605,343],[645,358],[692,388],[760,370],[795,350],[835,370],[857,355],[880,373],[900,376],[940,348],[985,320],[1010,180],[1030,255],[1050,293],[1073,260],[1112,310],[1135,275],[1158,330],[1180,315],[1198,330],[1222,320],[1262,352],[1305,323],[1365,350],[1390,328],[1412,340],[1440,330],[1470,335],[1495,352],[1520,376],[1540,350]];
 const B=[[17,340],[60,355],[135,387],[210,398],[320,394],[385,398],[490,412],[600,417],[700,423],[760,418],[850,397],[960,383],[1010,368],[1130,338],[1250,332],[1380,325],[1540,321]];
 const m=p=>p.map(a=>[a[0]/1.452-5,a[1]/3-57]);
 return chartCss(120)+`<svg width="1070" height="120" viewBox="0 0 1070 120">${frame(0,0,1070,120)}
 <text x="7" y="35" font-size="33.400" fill="#666">12385923127.00</text>
 ${line(m(G),GRY,2.600)}${line(m(B),BLU,3)}</svg>`;
});
/* ---------- tags / index / trade / nav ---------- */
def('tag-strip',`<style>:host{display:block;height:31px;box-sizing:border-box;padding:9px 0 0 14px;overflow:hidden;font-size:36px;color:#666;white-space:nowrap}
.w{display:flex;gap:13px}
.t{display:flex;flex:none;box-sizing:border-box;height:60px;padding:10px 23.500px 0;line-height:44px;background:#f8f8f8;border:1px solid #f1f1f1;border-radius:10px}
i{display:block;width:32px;height:32px;margin:4px 19px 0 -8px;background:linear-gradient(#f5c48a,#fde2c0);clip-path:polygon(22% 0,78% 0,100% 100%,0 100%)}
</style><div class="w"><span class="t">顶底猎手</span><span class="t">题材潜伏</span><span class="t">神奇九转</span><span class="t"><i></i>从事件中看机会</span><span class="t">党产</span></div>`);
def('index-bar',`<style>:host{display:flex;align-items:center;box-sizing:border-box;height:87px;padding:0 45px 0 37px;background:#fff;border-top:1px solid #eee;border-bottom:2px solid #eee;white-space:nowrap}
.n{font-size:37px;color:#666;margin-right:auto}
.v{font-size:38px;letter-spacing:.2px;color:#159a66}
svg{display:block;margin-left:45px}
</style><span class="n">创业板指</span><span class="v">3084.70</span><span class="v" style="margin-left:36px">-49.62</span><span class="v" style="margin-left:38px">-1.58%</span>
<svg width="35" height="20" viewBox="0 0 35 20"><path d="M2 18L17.500 2L33 18" fill="none" stroke="#999" stroke-width="3.500"/></svg>`);
def('trade-bar',`<style>:host{display:flex;box-sizing:border-box;height:155px;padding:19px 0 0 25px}
.btn{width:250px;height:108px;border-radius:6px;color:#fff;font-size:49px;font-weight:500;line-height:108px;text-align:center}
.sell{margin-left:24px}
.it{width:167px;display:flex;flex-direction:column;align-items:center;position:relative;margin-top:-2px;font-size:34.500px;line-height:40px;color:#666}
.it svg{display:block;height:60px;margin-bottom:12px}
.dot{position:absolute;left:134px;top:-15px;width:30px;height:30px;border-radius:50%;background:#e75041;box-shadow:1px 3px 6px rgba(0,0,0,.2)}
</style>
<div class="btn" style="background:#e03138">买入</div><div class="btn sell" style="background:#3370e0">卖出</div>
<div class="it"><svg width="60" height="60" viewBox="0 0 60 60"><path d="M19 3L4 16L21 28M4 16H34C48 16 55 26 55 37C55 48 48 57 34 57H4" fill="none" stroke="#1c1c1c" stroke-width="5" stroke-linecap="round" stroke-linejoin="round"/></svg>撤单</div>
<div class="it"><svg width="60" height="60" viewBox="0 0 60 60"><circle cx="30" cy="30" r="27" fill="none" stroke="#1c1c1c" stroke-width="5"/><g fill="#1c1c1c"><circle cx="20.500" cy="30" r="3"/><circle cx="30" cy="30" r="3"/><circle cx="39.500" cy="30" r="3"/></g></svg>设自选</div>
<div class="it"><svg width="60" height="60" viewBox="0 0 60 60"><g fill="#1c1c1c"><circle cx="5.500" cy="30" r="6"/><circle cx="30" cy="30" r="6"/><circle cx="54.500" cy="30" r="6"/></g></svg>更多<i class="dot"></i></div>`);
def('nav-bar',`<style>:host{display:flex;justify-content:center;gap:185px;padding-top:24px;height:84px;padding-right:1px}
svg{display:block}</style>
<svg width="44" height="48" viewBox="0 0 44 48"><rect x="2" y="3" width="40" height="42" rx="3" fill="none" stroke="#cfcfcf" stroke-width="4"/></svg>
<svg width="48" height="48" viewBox="0 0 48 48"><circle cx="24" cy="24" r="22" fill="none" stroke="#cfcfcf" stroke-width="4"/></svg>
<svg width="42" height="48" viewBox="0 0 42 48"><path d="M39 3V45L3 24Z" fill="none" stroke="#cfcfcf" stroke-width="4" stroke-linejoin="round"/></svg>`);
</script>
</body></html>
